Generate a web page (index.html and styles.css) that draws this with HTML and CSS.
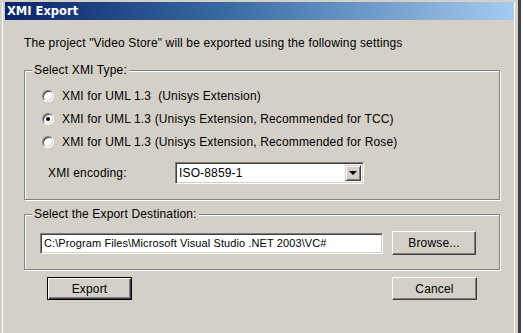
FILE: index.html
```html
<!DOCTYPE html>
<html lang="en">
<head>
  <meta charset="UTF-8" />
  <title>XMI Export</title>
  <link rel="stylesheet" href="styles.css">
</head>
<body>

  <div class="window">
    <div class="frame">
      <div class="titlebar">XMI Export</div>

      <div class="content">
        <p class="intro">The project "Video Store" will be exported using the following settings</p>

        <div class="group group-type">
          <span class="group-title">Select XMI Type:</span>
          <label class="radio"><span class="radio-box"></span><span class="radio-text">XMI for UML 1.3  (Unisys Extension)</span></label>
          <label class="radio"><span class="radio-box checked"></span><span class="radio-text">XMI for UML 1.3 (Unisys Extension, Recommended for TCC)</span></label>
          <label class="radio"><span class="radio-box"></span><span class="radio-text">XMI for UML 1.3 (Unisys Extension, Recommended for Rose)</span></label>

          <div class="encoding-row">
            <span class="encoding-label">XMI encoding:</span>
            <div class="combo">
              <span class="combo-value">ISO-8859-1</span>
              <span class="combo-button"><span class="arrow"></span></span>
            </div>
          </div>
        </div>

        <div class="group group-dest">
          <span class="group-title">Select the Export Destination:</span>
          <div class="dest-row">
            <div class="textbox">C:\Program Files\Microsoft Visual Studio .NET 2003\VC#</div>
            <div class="button browse">Browse...</div>
          </div>
        </div>

        <div class="actions">
          <div class="button default">Export</div>
          <div class="button">Cancel</div>
        </div>
      </div>
    </div>
  </div>

</body>
</html>
```

FILE: styles.css
```css
/* janela estilo Windows 2000 */
body {
  margin: 0;
  background: #fff;
  font-family: "Liberation Sans", Arial, sans-serif;
  font-size: 12px;
  letter-spacing: 0.15px;
  color: #000;
}

.window {
  width: 521px;
  height: 333px;
  box-sizing: border-box;
  padding: 2px 3px 0 2px;
  background: #d4d0c8;
  border-right: 3px solid #404040;
}

.frame {
  height: 100%;
  box-sizing: border-box;
  border-left: 1px solid #fff;
  border-right: 1px solid #fff;
  padding: 0 0 0 2px;
}

.titlebar {
  height: 18px;
  line-height: 18px;
  padding-left: 2px;
  background: linear-gradient(to right, #0a246a, #3a6ea5 45%, #a6caf0);
  color: #fff;
  font-family: "DejaVu Sans", sans-serif;
  font-weight: bold;
  font-size: 11.5px;
  letter-spacing: 0;
}

.content {
  padding: 0 14px 0 19px;
}

.intro {
  margin: 17px 0 0;
  line-height: 13px;
  white-space: pre;
}

/* caixas de grupo com borda "gravada" */
.group {
  position: relative;
  border: 1px solid #808080;
  box-shadow: inset 1px 1px 0 #fff, 1px 1px 0 #fff;
}

.group-title {
  position: absolute;
  top: -7px;
  left: 7px;
  padding: 0 2px;
  line-height: 13px;
  background: #d4d0c8;
}

.group-type {
  margin-top: 20px;
  height: 130px;
  box-sizing: border-box;
  padding: 13px 0 0 17px;
}

.radio {
  display: flex;
  align-items: center;
  height: 23px;
}

.radio-text {
  white-space: pre;
}

.radio-box {
  position: relative;
  width: 10px;
  height: 10px;
  margin-right: 8px;
  border-radius: 50%;
  background: #fff;
  border: 1px solid;
  border-color: #808080 #fff #fff #808080;
  box-shadow: inset 1px 1px 0 #404040, inset -1px -1px 0 #d4d0c8;
}

.radio-box.checked::after {
  content: "";
  position: absolute;
  left: 3px;
  top: 3px;
  width: 4px;
  height: 4px;
  border-radius: 50%;
  background: #000;
}

.encoding-row {
  display: flex;
  align-items: center;
  margin-top: 9px;
  padding-left: 6px;
}

.encoding-label {
  width: 127px;
}

.combo {
  display: flex;
  align-items: center;
  justify-content: space-between;
  width: 189px;
  height: 22px;
  box-sizing: border-box;
  padding: 0 2px 0 3px;
  background: #fff;
  border: 1px solid;
  border-color: #808080 #fff #fff #808080;
  box-shadow: inset 1px 1px 0 #404040, inset -1px -1px 0 #d4d0c8;
}

.combo-button {
  display: flex;
  align-items: center;
  justify-content: center;
  width: 16px;
  height: 16px;
  box-sizing: border-box;
  background: #d4d0c8;
  border: 1px solid;
  border-color: #d4d0c8 #404040 #404040 #d4d0c8;
  box-shadow: inset 1px 1px 0 #fff, inset -1px -1px 0 #808080;
}

.arrow {
  width: 0;
  height: 0;
  border-left: 4px solid transparent;
  border-right: 4px solid transparent;
  border-top: 4px solid #000;
}

.group-dest {
  margin-top: 14px;
  height: 56px;
  box-sizing: border-box;
  padding: 16px 0 0 15px;
}

.dest-row {
  display: flex;
  align-items: center;
  gap: 9px;
}

.textbox {
  width: 343px;
  height: 21px;
  line-height: 18px;
  box-sizing: border-box;
  padding-left: 3px;
  font-size: 11px;
  letter-spacing: 0.1px;
  background: #fff;
  border: 1px solid;
  border-color: #808080 #fff #fff #808080;
  box-shadow: inset 1px 1px 0 #404040, inset -1px -1px 0 #d4d0c8;
  white-space: pre;
}

/* botões */
.button {
  width: 85px;
  height: 23px;
  box-sizing: border-box;
  display: flex;
  align-items: center;
  justify-content: center;
  background: #d4d0c8;
  border: 1px solid;
  border-color: #fff #404040 #404040 #fff;
  box-shadow: inset -1px -1px 0 #808080;
}

.browse {
  width: 84px;
  height: 24px;
}

.button.default {
  border: 1px solid #000;
  box-shadow: inset 1px 1px 0 #fff, inset -1px -1px 0 #404040, inset -2px -2px 0 #808080;
}

.actions {
  display: flex;
  justify-content: space-between;
  margin-top: 7px;
  padding: 0 23px;
}
```
